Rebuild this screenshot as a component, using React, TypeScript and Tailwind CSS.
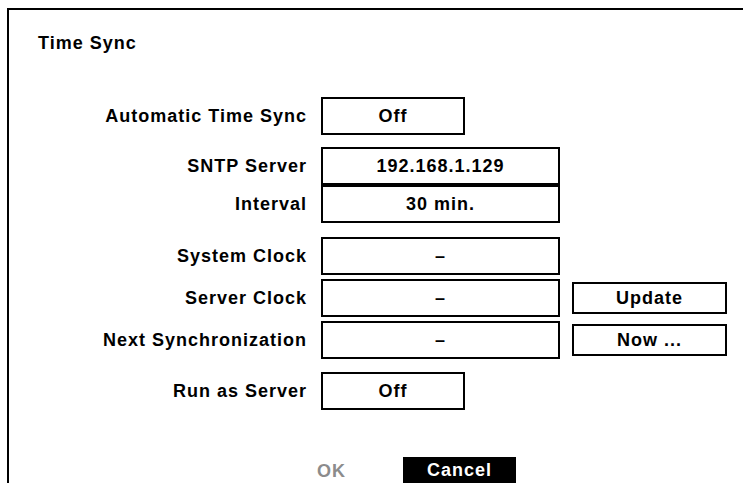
import React from "react";

type RowProps = {
  label: string;
  value: string;
  wide?: boolean;
  action?: string;
};

function Field({ label, value, wide = false, action }: RowProps) {
  return (
    <div className="flex h-[38px] items-center">
      <div className="w-[298px] mr-[14px] text-right">{label}</div>
      <div
        className={
          wide
            ? "flex h-full w-[239px] items-center justify-center border-2 border-black"
            : "flex h-full w-[144px] items-center justify-center border-2 border-black"
        }
      >
        {value}
      </div>
      {action ? (
        <div className="ml-[12px] flex h-[32px] w-[155px] items-center justify-center border-2 border-black">
          {action}
        </div>
      ) : null}
    </div>
  );
}

export default function App() {
  return (
    <div className="h-[483px] w-[743px] overflow-hidden bg-white font-['Liberation_Sans',Arial,sans-serif] text-[18px] leading-[20px] font-bold tracking-[1px] text-black">
      <div className="ml-[7px] mt-[8px] h-[520px] w-[780px] border-l-2 border-t-2 border-black">
        <div className="pl-[29px] pt-[23px]">Time Sync</div>

        <div className="mt-[44px] flex flex-col">
          <Field label="Automatic Time Sync" value="Off" />

          <div className="mt-[12px] flex flex-col">
            <Field label="SNTP Server" value="192.168.1.129" wide />
            <Field label="Interval" value="30 min." wide />
          </div>

          <div className="mt-[14px] flex flex-col gap-[4px]">
            <Field label="System Clock" value="–" wide />
            <Field label="Server Clock" value="–" wide action="Update" />
            <Field label="Next Synchronization" value="–" wide action="Now ..." />
          </div>

          <div className="mt-[13px]">
            <Field label="Run as Server" value="Off" />
          </div>

          <div className="mt-[47px] flex items-start pl-[308px]">
            <div className="pt-[4px] text-[#8c8c8c]">OK</div>
            <div className="ml-[57px] flex h-[30px] w-[113px] items-center justify-center bg-black pb-[4px] text-white">
              Cancel
            </div>
          </div>
        </div>
      </div>
    </div>
  );
}
